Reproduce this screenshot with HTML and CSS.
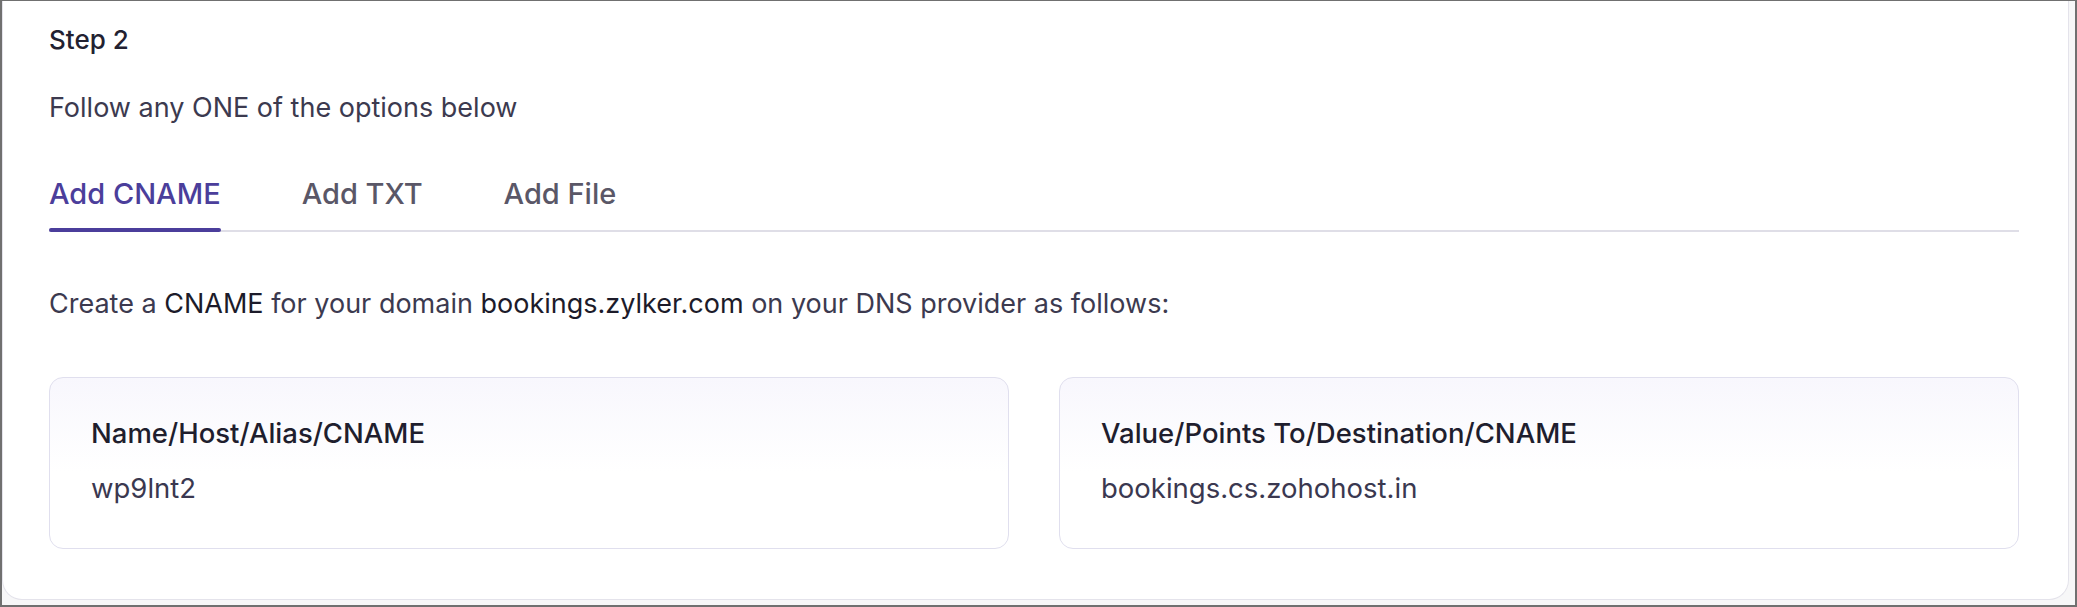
FILE: index.html
```html
<!DOCTYPE html>
<html lang="en">
<head>
<meta charset="utf-8">
<title>Step 2</title>
<link rel="stylesheet" href="styles.css">
</head>
<body>
<div class="frame">
  <section class="panel">
    <h2 class="step-title">Step 2</h2>
    <p class="step-desc">Follow any ONE of the options below</p>
    <nav class="tabs">
      <span class="tab active">Add CNAME</span>
      <span class="tab">Add TXT</span>
      <span class="tab">Add File</span>
    </nav>
    <p class="instructions">Create a <span class="em">CNAME</span> for your domain <span class="em">bookings.zylker.com</span> on your DNS provider as follows:</p>
    <div class="records">
      <div class="record">
        <div class="record-label">Name/Host/Alias/CNAME</div>
        <div class="record-value">wp9lnt2</div>
      </div>
      <div class="record">
        <div class="record-label">Value/Points To/Destination/CNAME</div>
        <div class="record-value">bookings.cs.zohohost.in</div>
      </div>
    </div>
  </section>
</div>
</body>
</html>
```

FILE: styles.css
```css
* { box-sizing: border-box; }
html, body {
  margin: 0;
  padding: 0;
  background: #ffffff;
}
body {
  font-family: Inter, "Noto Sans", "Liberation Sans", sans-serif;
  color: #3c3a4f;
}
.frame {
  width: 2077px;
  height: 607px;
  border-style: solid;
  border-color: #707070;
  border-width: 1px 2px 2px 2px;
  background: #f7f7f8;
  display: flex;
  flex-direction: column;
  overflow: hidden;
}
.panel {
  flex: 1;
  margin: 0 6px 5px 0;
  background: #ffffff;
  border: 1px solid #e4e3eb;
  border-top: none;
  border-radius: 0 0 20px 20px;
  padding: 21px 49px 0 46px;
}
.step-title {
  margin: 0;
  font-size: 26px;
  line-height: 36px;
  font-weight: 500;
  color: #222131;
}
.step-desc {
  margin: 32px 0 0;
  font-size: 27px;
  line-height: 36px;
  font-weight: 400;
  color: #3c3a4f;
}
.tabs {
  margin-top: 48px;
  display: flex;
  gap: 81px;
  border-bottom: 2px solid #dfdee7;
}
.tab {
  position: relative;
  font-size: 29px;
  line-height: 40px;
  font-weight: 500;
  color: #5a5767;
  padding-bottom: 16px;
}
.tab.active {
  color: #4b3e9b;
}
.tab.active::after {
  content: "";
  position: absolute;
  left: 0;
  right: 0;
  bottom: -2px;
  height: 4px;
  border-radius: 2px;
  background: #4b3e9b;
}
.instructions {
  margin: 54px 0 0;
  font-size: 27px;
  line-height: 36px;
  color: #3c3a4f;
}
.instructions .em {
  color: #1c1b2a;
  font-weight: 400;
}
.records {
  margin-top: 55px;
  display: grid;
  grid-template-columns: 1fr 1fr;
  gap: 50px;
}
.record {
  height: 172px;
  border: 1.5px solid #e0dfee;
  border-radius: 14px;
  background: linear-gradient(180deg, #f8f7fd 0%, #ffffff 55%);
  padding: 37px 40px 0 41px;
}
.record-label {
  font-size: 27.5px;
  line-height: 36px;
  font-weight: 500;
  color: #1f1e2e;
}
.record-value {
  margin-top: 19px;
  font-size: 27.5px;
  line-height: 36px;
  color: #3a3850;
}
```
